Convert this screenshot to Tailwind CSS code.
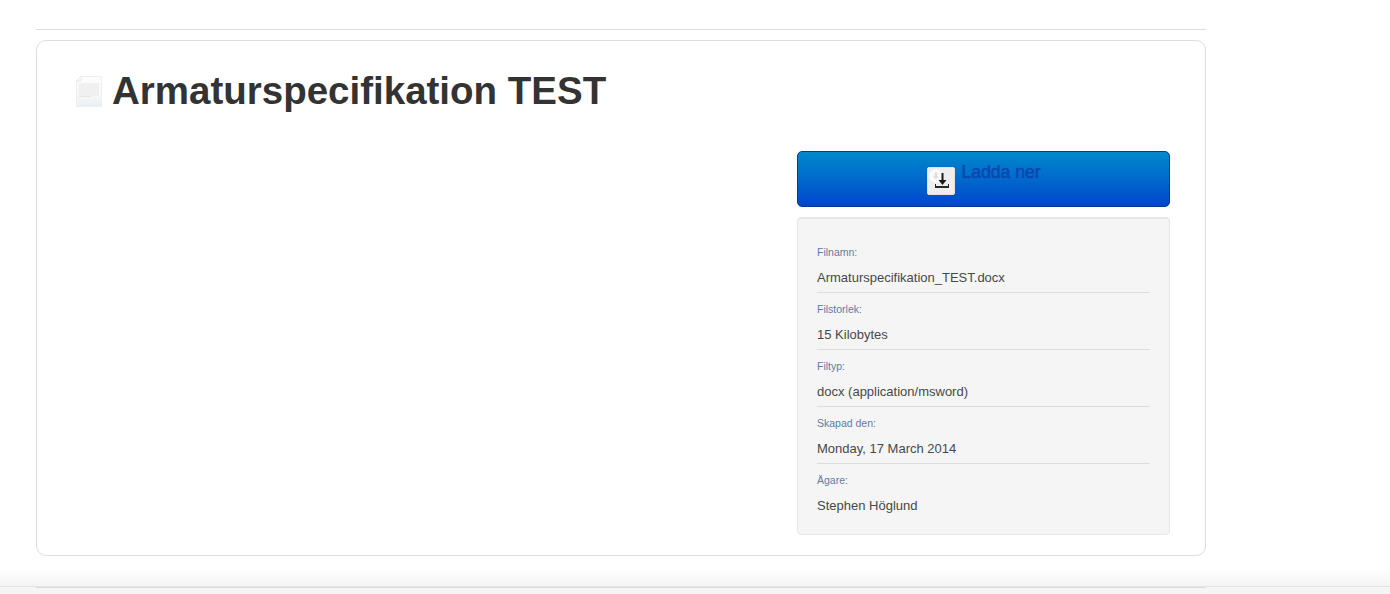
<!DOCTYPE html>
<html lang="en">
<head>
  <meta charset="UTF-8" />
  <meta name="viewport" content="width=device-width, initial-scale=1.0"/>
  <title>Armaturspecifikation TEST</title>
  <script src="https://cdn.jsdelivr.net/npm/@tailwindcss/browser@4"></script>
</head>
<body class="h-[594px] overflow-hidden bg-white font-['Liberation_Sans',Arial,sans-serif] text-[#333]">

  <main class="h-[586px] pl-[36px] pt-[29px] bg-gradient-to-b from-white from-[97%] to-[#f4f4f4]">
    <div class="w-[1170px]">
      <hr class="border-0 border-t border-[#ddd] mb-[10px]" />

      <!-- File card -->
      <div class="h-[516px] border border-[#ddd] rounded-[10px] bg-white pt-[28px] pl-[39px] pr-[35px]">
        <div class="flex items-center h-[44px]">
          <svg class="w-[26px] h-[31px] mr-[10px] mt-[1px]" viewBox="0 0 26 31">
            <defs>
              <linearGradient id="page" x1="0" y1="0" x2="0" y2="1">
                <stop offset="0" stop-color="#fdfdfd"/>
                <stop offset="0.6" stop-color="#f8f8f8"/>
                <stop offset="1" stop-color="#e9f0f3"/>
              </linearGradient>
            </defs>
            <path d="M5 .5H25.500V30.500H.5V5Z" fill="url(#page)" stroke="#eeeeee"/>
            <path d="M5 .5V5H.5Z" fill="#fff" stroke="#e6e6e6"/>
            <rect x="3" y="7" width="20" height="13" fill="#f0f0f0"/>
            <rect x="3" y="20" width="12" height="1" fill="#e6e6e6"/>
          </svg>
          <h1 class="text-[38.5px] leading-[44px] font-bold text-[#333]">Armaturspecifikation TEST</h1>
        </div>

        <div class="flex justify-end mt-[38px]">
          <div class="w-[373px]">
            <a href="#" class="h-[56px] flex justify-center rounded-[5px] border border-[#04379e] bg-gradient-to-b from-[#0088cc] to-[#0044cc]">
              <span class="w-[28px] h-[28px] mt-[15px] ml-[1px] mr-[6px] bg-[#eeeeee] border border-[#e2e2e2] rounded-[2px] relative">
                <svg class="absolute left-0 top-0 w-[26px] h-[26px]" viewBox="0 0 26 26">
                  <circle cx="8" cy="8" r="5.500" fill="#f6f6f6" stroke="#ffffff" stroke-width="2"/>
                  <path d="M7 4.500H9V8H10.500L8 11 5.500 8H7Z" fill="#dcdcdc"/>
                  <path d="M13.500 5H15.500V12H18.500L14.500 17 10.500 12H13.500Z" fill="#1c1c1c"/>
                  <path d="M7 16H8V18H20V16H21V20H7Z" fill="#2a2620"/>
                </svg>
              </span>
              <span class="text-[17.6px] leading-[20px] mt-[10px] text-[#0a47b0] [text-shadow:0_0_1px_#0a47b0]">Ladda ner</span>
            </a>

            <!-- File details -->
            <dl class="h-[318px] mt-[10px] border border-[#e6e6e6] rounded-[4px] bg-[#f5f5f5] shadow-[inset_0_1px_1px_rgba(0,0,0,0.05)] pt-[26px] px-[19px]">
              <div class="h-[49px] border-b border-[#ddd]">
                <dt class="text-[10.5px] leading-[16px] text-[#5f7da3]">Filnamn:</dt>
                <dd class="text-[13px] leading-[20px] mt-[8px] text-[#484848]">Armaturspecifikation_TEST.docx</dd>
              </div>
              <div class="h-[57px] border-b border-[#ddd] pt-[8px]">
                <dt class="text-[10.5px] leading-[16px] text-[#5f7da3]">Filstorlek:</dt>
                <dd class="text-[13px] leading-[20px] mt-[8px] text-[#484848]">15 Kilobytes</dd>
              </div>
              <div class="h-[57px] border-b border-[#ddd] pt-[8px]">
                <dt class="text-[10.5px] leading-[16px] text-[#5f7da3]">Filtyp:</dt>
                <dd class="text-[13px] leading-[20px] mt-[8px] text-[#484848]">docx (application/msword)</dd>
              </div>
              <div class="h-[57px] border-b border-[#ddd] pt-[8px]">
                <dt class="text-[10.5px] leading-[16px] text-[#5f7da3]">Skapad den:</dt>
                <dd class="text-[13px] leading-[20px] mt-[8px] text-[#484848]">Monday, 17 March 2014</dd>
              </div>
              <div class="h-[57px] pt-[8px]">
                <dt class="text-[10.5px] leading-[16px] text-[#5f7da3]">Ägare:</dt>
                <dd class="text-[13px] leading-[20px] mt-[8px] text-[#484848]">Stephen Höglund</dd>
              </div>
            </dl>
          </div>
        </div>
      </div>
    </div>
  </main>

  <!-- Footer edge -->
  <footer class="h-[8px] bg-[#f5f5f5] border-t border-[#e5e5e5]">
    <div class="ml-[36px] w-[1170px] h-[1px] bg-[#dcdcdc]"></div>
  </footer>
</body>
</html>
